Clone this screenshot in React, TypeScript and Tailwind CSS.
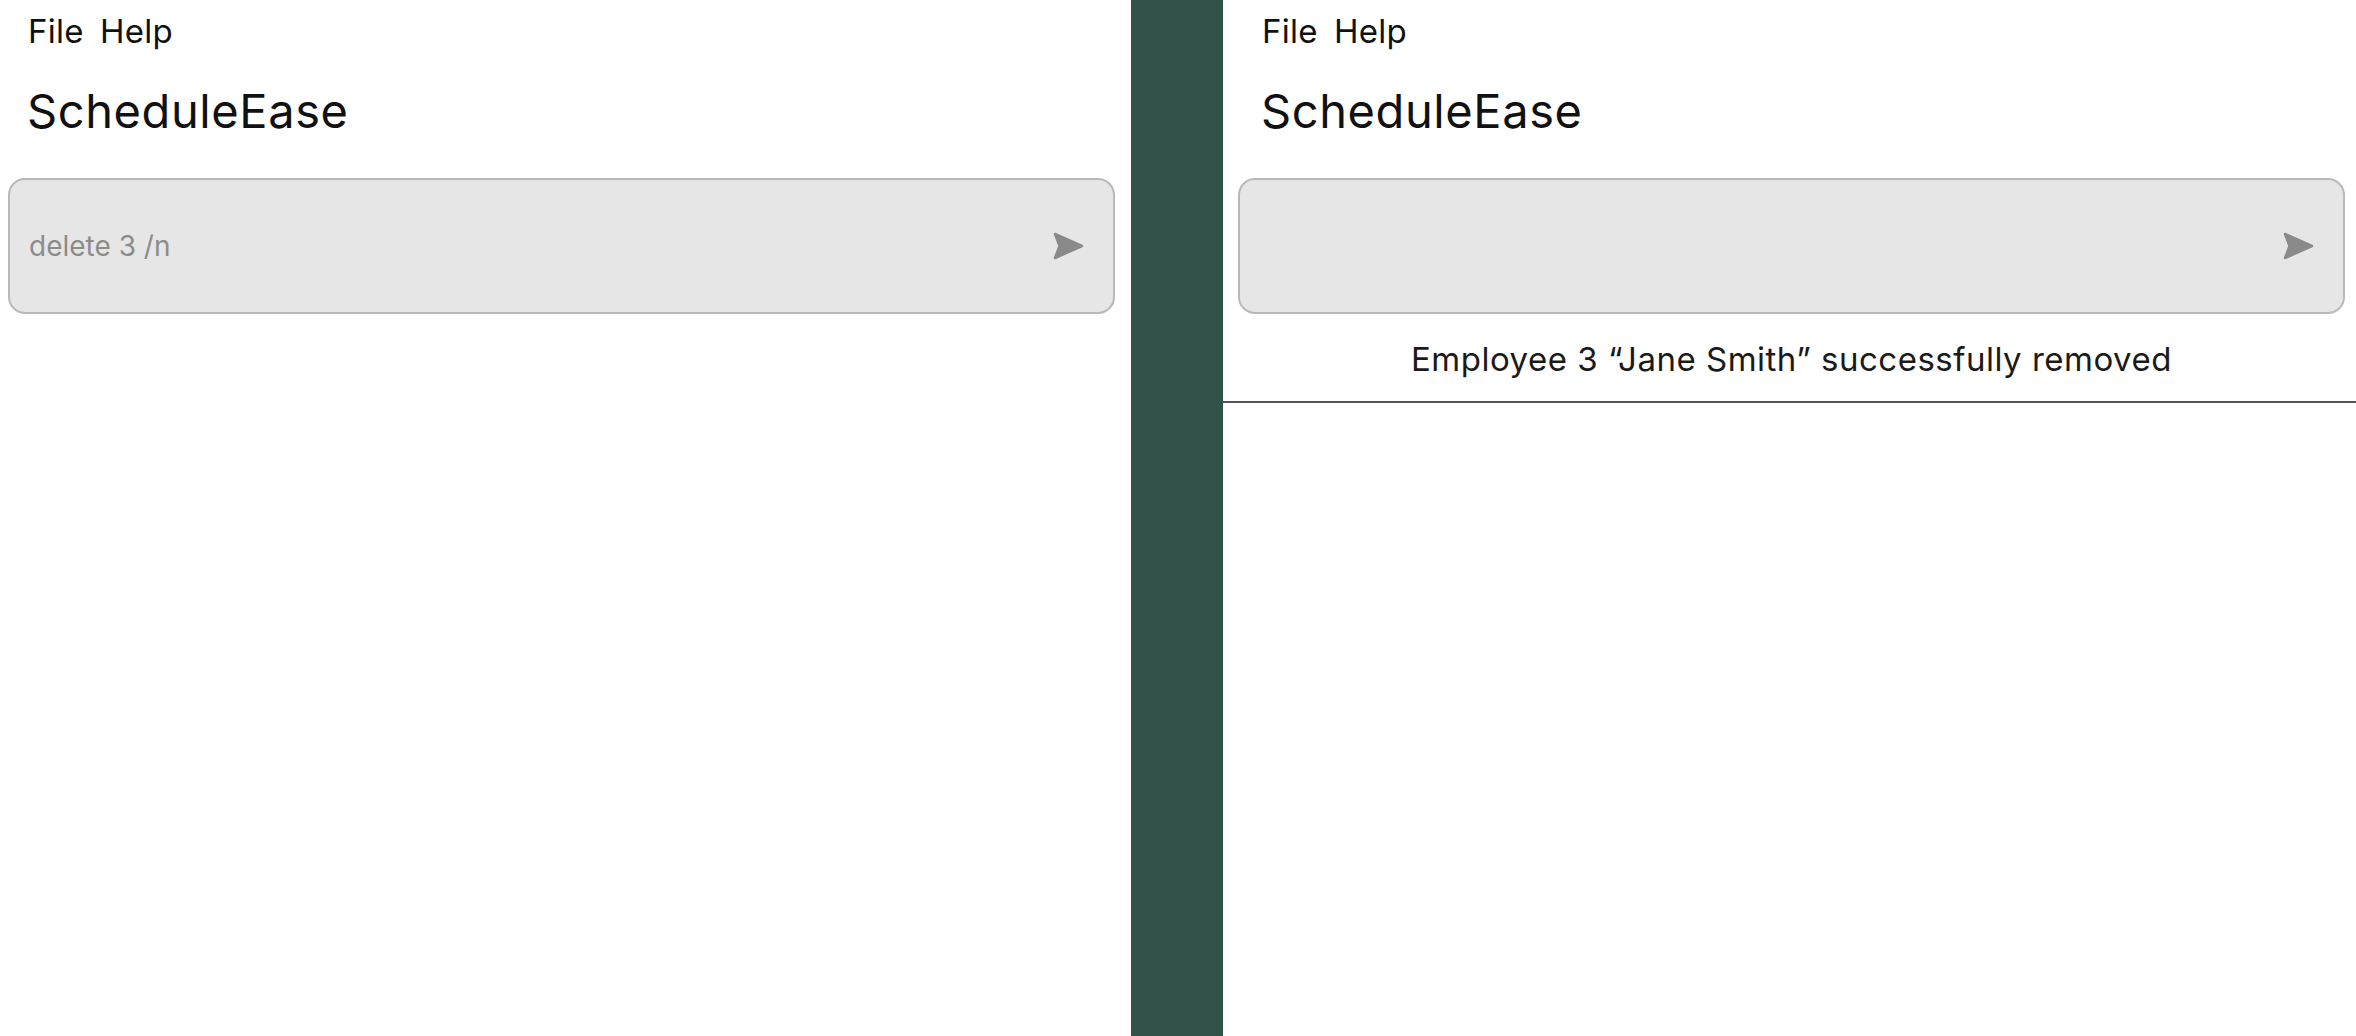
import React from 'react';

function SendArrow() {
  return (
    <svg width="32" height="28" viewBox="0 0 32 28" className="shrink-0">
      <path
        d="M3 2 L30 14 L3 26 L7.5 14 Z"
        fill="#8a8a8a"
        stroke="#8a8a8a"
        strokeWidth="2.5"
        strokeLinejoin="round"
      />
    </svg>
  );
}

function Pane({ command, message, wide }: { command: string; message?: string; wide?: boolean }) {
  return (
    <div className="flex flex-col">
      {/* Menu + title */}
      <div
        className={
          (wide ? 'pl-[24px]' : 'pl-[20px]') +
          ' pt-[15px] flex gap-[16px] text-[33px] leading-none text-[#111] tracking-[0.3px]'
        }
      >
        <span>File</span>
        <span>Help</span>
      </div>
      <h1
        className={
          (wide ? 'pl-[23px]' : 'pl-[19px]') +
          ' mt-[39px] text-[47px] leading-none font-normal text-[#111] tracking-[0.6px]'
        }
      >
        ScheduleEase
      </h1>

      {/* Command box */}
      <div className="mt-[44px] h-[136px] rounded-[17px] border-2 border-[#b9b9b9] bg-[#e6e6e6] flex items-center justify-between pl-[19px] pr-[29px]">
        <span className="text-[28px] text-[#8c8c8c] leading-none">{command}</span>
        <SendArrow />
      </div>

      {message && (
        <p className="mt-[29px] text-center text-[33px] leading-none text-[#1a1a1a] tracking-[0.5px]">{message}</p>
      )}
    </div>
  );
}

export default function App() {
  return (
    <div className="h-screen w-full flex bg-white font-['Inter','Liberation_Sans',sans-serif] overflow-hidden">
      {/* Left pane */}
      <div className="w-[1131px] shrink-0 pl-[8px] pr-[16px]">
        <Pane command="delete 3 /n" />
      </div>

      {/* Divider */}
      <div className="w-[92px] shrink-0 bg-[#325148]" />

      {/* Right pane */}
      <div className="flex-1 flex flex-col">
        <div className="pl-[15px] pr-[11px]">
          <Pane command="" wide message="Employee 3 “Jane Smith” successfully removed" />
        </div>
        <div className="mt-[25px] border-t-2 border-[#555]" />
      </div>
    </div>
  );
}
